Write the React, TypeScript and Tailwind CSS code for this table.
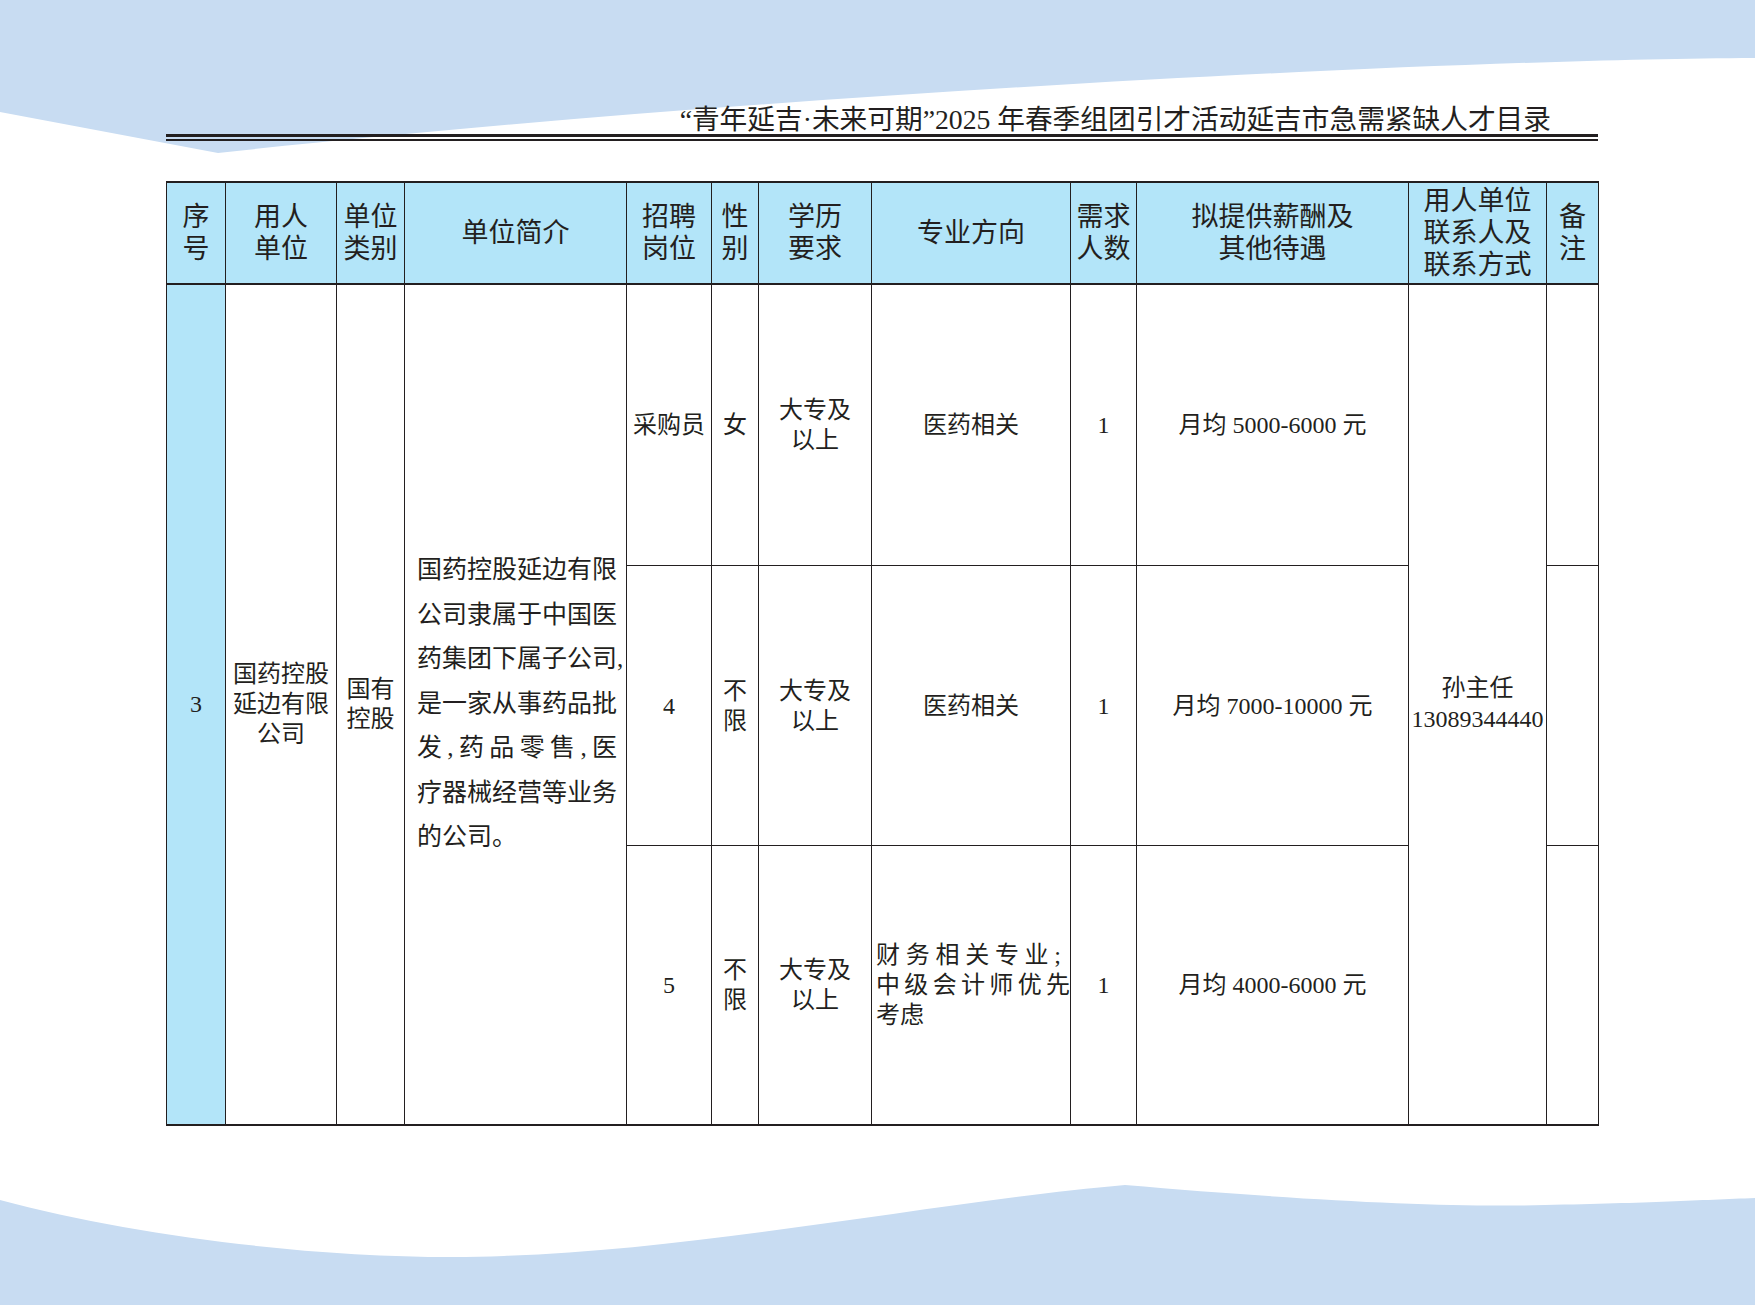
import React from "react";

const B = "border border-[#231f20] p-0 text-center align-middle";
const TH = `${B} border-b-2 border-b-[#231f20] bg-[#b3e5f9] font-normal text-[27px] leading-[32px]`;
const TD = `${B} text-[24px] leading-[30px]`;

function Row({
  first,
  last,
  h,
  post,
  gender,
  major,
  salary,
}: {
  first?: React.ReactNode;
  last?: boolean;
  h: string;
  post: React.ReactNode;
  gender: React.ReactNode;
  major: React.ReactNode;
  salary: React.ReactNode;
}) {
  const bb = last ? " border-b-2" : "";
  return (
    <tr className={h}>
      {first}
      <td className={TD + bb}>{post}</td>
      <td className={TD + bb}>{gender}</td>
      <td className={TD + bb}>
        大专及
        <br />
        以上
      </td>
      {major}
      <td className={TD + bb}>1</td>
      <td className={TD + bb}>{salary}</td>
      {first ? (
        <td rowSpan={3} className={TD + " border-b-2 text-[22.5px] leading-[31px]"}>
          <span className="text-[24px]">孙主任</span>
          <br />
          13089344440
        </td>
      ) : null}
      <td className={TD + bb}></td>
    </tr>
  );
}

export default function App() {
  const cyan = "bg-[#b3e5f9]";
  return (
    <div className="relative w-[1755px] h-[1307px] overflow-hidden bg-white text-[#231f20] font-['Liberation_Serif','Noto_Sans_CJK_SC',serif]">
      <svg className="absolute inset-0" width="1755" height="1307" viewBox="0 0 1755 1307">
        <path d="M0,0 H1755 V58 C1400,60 700,100 218,153 L0,112 Z" fill="#c8dcf2" />
        <path
          d="M0,1200 C150,1240 350,1262 504,1256 C700,1250 950,1200 1125,1185 C1300,1200 1450,1208 1545,1205 C1650,1203 1700,1200 1755,1198 V1305 H0 Z"
          fill="#c8dcf2"
        />
      </svg>
      <div className="relative pl-[166px] pr-[157px] pt-[101px]">
        <div className="h-[33px] pr-[47px] text-right text-[27.7px] leading-[37px] whitespace-nowrap">
          “青年延吉·未来可期”2025 年春季组团引才活动延吉市急需紧缺人才目录
        </div>
        <div className="h-[3px] bg-[#231f20]" />
        <div className="mt-[2px] h-[1.5px] bg-[#231f20]" />
        <table className="mt-[40px] w-[1432px] table-fixed border-collapse border-t-2 border-[#231f20] bg-white">
          <colgroup>
            <col className="w-[59px]" />
            <col className="w-[111px]" />
            <col className="w-[68px]" />
            <col className="w-[222px]" />
            <col className="w-[85px]" />
            <col className="w-[47px]" />
            <col className="w-[113px]" />
            <col className="w-[199px]" />
            <col className="w-[66px]" />
            <col className="w-[272px]" />
            <col className="w-[138px]" />
            <col className="w-[52px]" />
          </colgroup>
          <thead>
            <tr className="h-[102px]">
              <th className={TH}>序<br />号</th>
              <th className={TH}>用人<br />单位</th>
              <th className={TH}>单位<br />类别</th>
              <th className={TH}>单位简介</th>
              <th className={TH}>招聘<br />岗位</th>
              <th className={TH}>性<br />别</th>
              <th className={TH}>学历<br />要求</th>
              <th className={TH}>专业方向</th>
              <th className={TH}>需求<br />人数</th>
              <th className={TH}>拟提供薪酬及<br />其他待遇</th>
              <th className={TH}>用人单位<br />联系人及<br />联系方式</th>
              <th className={TH}>备<br />注</th>
            </tr>
          </thead>
          <tbody>
            <Row
              h="h-[282px]"
              first={
                <>
                  <td rowSpan={3} className={`${TD} ${cyan} border-b-2`}>3</td>
                  <td rowSpan={3} className={`${TD} border-b-2`}>
                    国药控股
                    <br />
                    延边有限
                    <br />
                    公司
                  </td>
                  <td rowSpan={3} className={`${TD} border-b-2`}>
                    国有
                    <br />
                    控股
                  </td>
                  <td rowSpan={3} className={`${B} border-b-2 pl-[12px] text-left text-[25px] leading-[44.5px]`}>
                    <div className="w-[200px] text-justify [text-align-last:justify]">国药控股延边有限</div>
                    <div className="w-[200px] text-justify [text-align-last:justify]">公司隶属于中国医</div>
                    <div className="w-[200px] whitespace-nowrap">药集团下属子公司,</div>
                    <div className="w-[200px] text-justify [text-align-last:justify]">是一家从事药品批</div>
                    <div className="w-[200px] text-justify [text-align-last:justify]">发,药品零售,医</div>
                    <div className="w-[200px] text-justify [text-align-last:justify]">疗器械经营等业务</div>
                    <div className="w-[200px]">的公司。</div>
                  </td>
                </>
              }
              post="采购员"
              gender="女"
              major={<td className={TD}>医药相关</td>}
              salary="月均 5000-6000 元"
            />
            <Row
              h="h-[280px]"
              post="4"
              gender={
                <>
                  不
                  <br />
                  限
                </>
              }
              major={<td className={TD}>医药相关</td>}
              salary="月均 7000-10000 元"
            />
            <Row
              h="h-[279px]"
              last
              post="5"
              gender={
                <>
                  不
                  <br />
                  限
                </>
              }
              major={
                <td className={`${TD} border-b-2 pl-[4px] text-left`}>
                  <div className="w-[185px] text-justify [text-align-last:justify]">财务相关专业;</div>
                  <div className="w-[194px] text-justify [text-align-last:justify]">中级会计师优先</div>
                  <div>考虑</div>
                </td>
              }
              salary="月均 4000-6000 元"
            />
          </tbody>
        </table>
      </div>
    </div>
  );
}
